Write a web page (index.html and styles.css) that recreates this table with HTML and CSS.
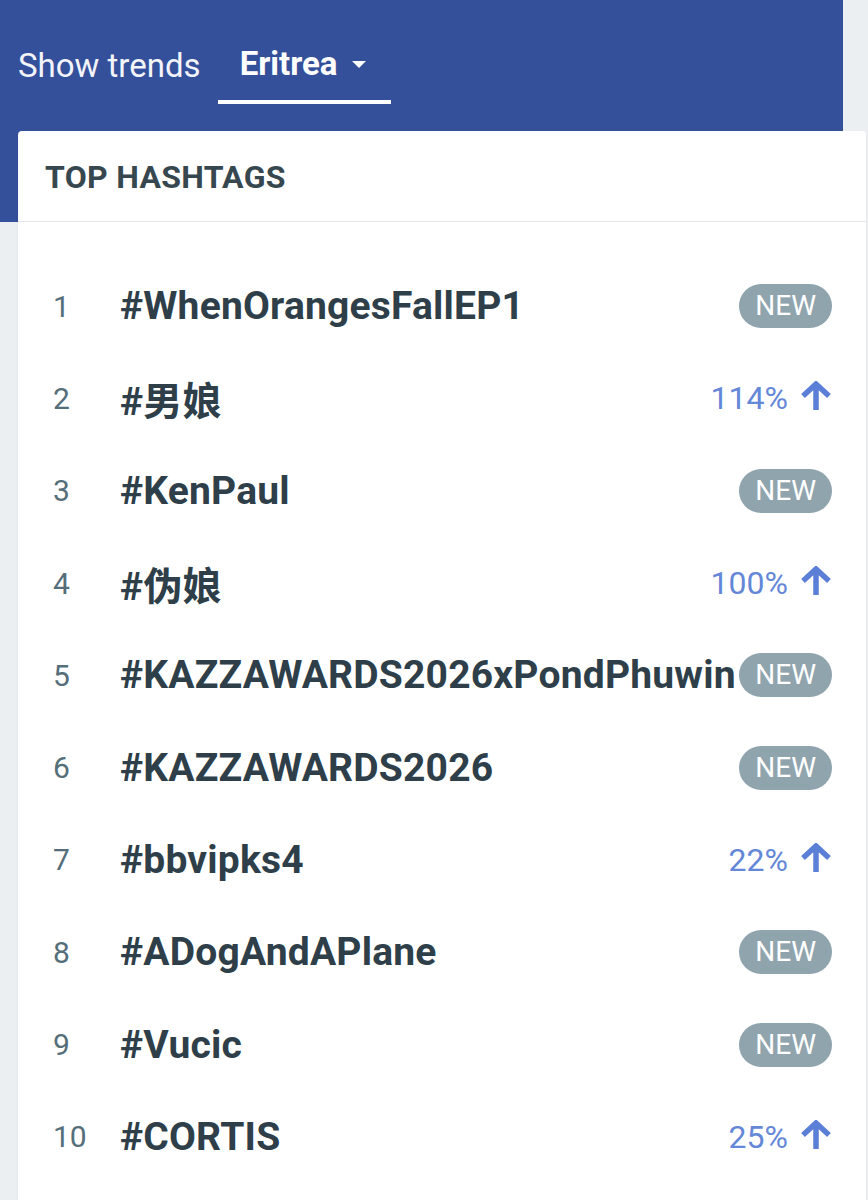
FILE: index.html
```html
<!DOCTYPE html>
<html lang="en">
<head>
  <meta charset="UTF-8" />
  <meta name="viewport" content="width=device-width, initial-scale=1.0"/>
  <title>Trends</title>
  <link rel="stylesheet" href="styles.css">
</head>
<body>

  <div class="page">
    <div class="topbar">
      <span class="show-label">Show trends</span>
      <div class="country-tab">
        <span class="country">Eritrea</span>
        <svg class="caret" viewBox="0 0 10 5" width="14" height="7"><path d="M0 0h10L5 5z" fill="#fff"/></svg>
      </div>
    </div>

    <div class="card">
      <div class="card-head">TOP HASHTAGS</div>
      <ul class="trend-list">
        <li class="trend"><span class="rank">1</span><span class="tag">#WhenOrangesFallEP1</span><span class="badge">NEW</span></li>
        <li class="trend"><span class="rank">2</span><span class="tag">#男娘</span><span class="growth">114% <svg class="arrow" viewBox="0 0 32 30"><path d="M3 15L16 3l13 12M16 4v25"/></svg></span></li>
        <li class="trend"><span class="rank">3</span><span class="tag">#KenPaul</span><span class="badge">NEW</span></li>
        <li class="trend"><span class="rank">4</span><span class="tag">#伪娘</span><span class="growth">100% <svg class="arrow" viewBox="0 0 32 30"><path d="M3 15L16 3l13 12M16 4v25"/></svg></span></li>
        <li class="trend"><span class="rank">5</span><span class="tag">#KAZZAWARDS2026xPondPhuwin</span><span class="badge">NEW</span></li>
        <li class="trend"><span class="rank">6</span><span class="tag">#KAZZAWARDS2026</span><span class="badge">NEW</span></li>
        <li class="trend"><span class="rank">7</span><span class="tag">#bbvipks4</span><span class="growth">22% <svg class="arrow" viewBox="0 0 32 30"><path d="M3 15L16 3l13 12M16 4v25"/></svg></span></li>
        <li class="trend"><span class="rank">8</span><span class="tag">#ADogAndAPlane</span><span class="badge">NEW</span></li>
        <li class="trend"><span class="rank">9</span><span class="tag">#Vucic</span><span class="badge">NEW</span></li>
        <li class="trend"><span class="rank">10</span><span class="tag">#CORTIS</span><span class="growth">25% <svg class="arrow" viewBox="0 0 32 30"><path d="M3 15L16 3l13 12M16 4v25"/></svg></span></li>
      </ul>
    </div>
  </div>

</body>
</html>
```

FILE: styles.css
```css
body {
  margin: 0;
  background: #eceff1;
  font-family: Roboto, "Noto Sans CJK SC", sans-serif;
  color: #37474f;
  overflow: hidden;
}

.page {
  width: 868px;
}

.topbar {
  width: 843px;
  height: 222px;
  background: #35509a;
  display: flex;
  align-items: flex-start;
  padding: 43px 0 0 18px;
  box-sizing: border-box;
  color: #fff;
}

.show-label {
  font-size: 33px;
  line-height: 46px;
  color: #f2f4fa;
}

.country-tab {
  margin-left: 17px;
  width: 173px;
  height: 61px;
  box-sizing: border-box;
  border-bottom: 4px solid #fff;
  display: flex;
  align-items: flex-start;
  padding-left: 22px;
}

.country {
  font-size: 33px;
  font-weight: 700;
  line-height: 42px;
}

.caret {
  margin: 18px 0 0 15px;
}

.card {
  margin: -91px 2px 0 18px;
  padding-bottom: 60px;
  background: #fff;
  border-radius: 4px;
  box-shadow: 0 1px 2px rgba(0, 0, 0, 0.08);
  position: relative;
}

.card-head {
  height: 91px;
  box-sizing: border-box;
  border-bottom: 1px solid #e3e6e8;
  padding: 2px 27px 0;
  display: flex;
  align-items: center;
  font-size: 32px;
  font-weight: 700;
  letter-spacing: 0.3px;
  color: #37474f;
}

.trend-list {
  list-style: none;
  margin: 0;
  padding: 38px 0 0;
}

.trend {
  height: 92.3px;
  display: flex;
  align-items: center;
  padding: 0 34px 0 0;
}

.rank {
  width: 102px;
  box-sizing: border-box;
  padding-left: 35px;
  font-size: 30px;
  color: #546e7a;
}

.tag {
  flex: 1;
  min-width: 0;
  font-size: 39px;
  font-weight: 700;
  letter-spacing: 0.2px;
  color: #2f3f4a;
  white-space: nowrap;
}

.badge {
  background: #90a4ae;
  color: #fff;
  font-size: 28px;
  line-height: 44px;
  padding: 0 16px;
  border-radius: 22px;
}

.growth {
  display: flex;
  align-items: center;
  gap: 12px;
  font-size: 32px;
  color: #6487d8;
}

.arrow {
  width: 32px;
  height: 30px;
  fill: none;
  stroke: #5b7fd6;
  stroke-width: 5.5;
  margin-top: -4px;
}
```
